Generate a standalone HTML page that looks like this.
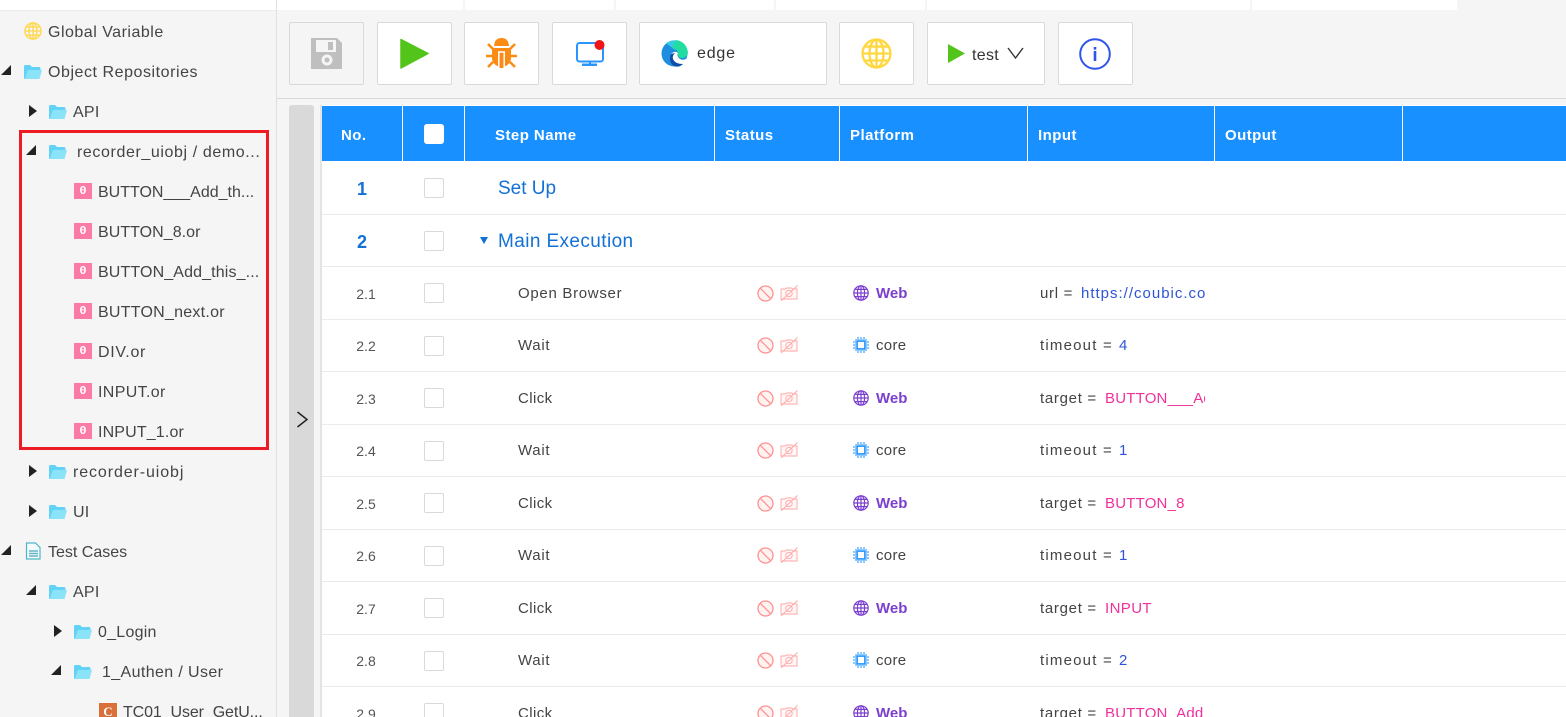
<!DOCTYPE html>
<html><head><meta charset="utf-8"><style>
html,body{margin:0;padding:0;width:1566px;height:717px;overflow:hidden;background:#f5f5f5;font-family:"Liberation Sans",sans-serif;color:#333}
#w{position:relative;width:1566px;height:717px;overflow:hidden;background:#f5f5f5}
.a{position:absolute}
.t{position:absolute;white-space:nowrap;line-height:20px;height:20px}
.s{font-size:16px;color:#444;margin-top:2px}
.btn{position:absolute;top:22px;height:61px;background:#fff;border:1px solid #d9d9d9;border-radius:2px}
.tri-d{position:absolute;width:0;height:0;border-left:10px solid transparent;border-bottom:10px solid #222}
.tri-r{position:absolute;width:0;height:0;border-left:8px solid #222;border-top:6px solid transparent;border-bottom:6px solid transparent}
.or{position:absolute;left:74px;width:18px;height:16px;background:#fb7ba6;color:#fff;font:bold 12px/16px "Liberation Mono",monospace;text-align:center;margin-top:-1px}
.hl{position:absolute;left:322px;right:0;height:1px;background:#ebebeb}
.vl{position:absolute;top:106px;height:55px;width:1px;background:#fff}
.h{position:absolute;top:125px;font-size:15px;font-weight:bold;color:#fff;line-height:20px;letter-spacing:.45px;margin-top:1px}
.cb{position:absolute;left:424px;width:18px;height:18px;border:1px solid #d9d9d9;border-radius:2px;background:#fff}
.no{position:absolute;left:340px;width:52px;text-align:center;font-size:14px;line-height:20px;color:#555}
.nb{position:absolute;left:337px;width:50px;text-align:center;font-size:18px;font-weight:bold;line-height:24px;color:#1370d6}
.sec{position:absolute;left:498px;font-size:19px;line-height:24px;color:#1370d6;white-space:nowrap;letter-spacing:.4px}
.st{position:absolute;left:518px;font-size:15px;line-height:20px;color:#444;letter-spacing:.7px;white-space:nowrap}
.pf{position:absolute;left:876px;font-size:15px;line-height:20px;font-weight:bold;color:#7b3fd0}
.pc{position:absolute;left:876px;font-size:15px;line-height:20px;color:#444;letter-spacing:.3px}
.in{position:absolute;left:1040px;width:165px;overflow:hidden;white-space:nowrap;font-size:15px;line-height:20px;color:#444;letter-spacing:.4px}
.in i{font-style:normal;display:inline-block}
.u{width:41px;letter-spacing:.7px}.o{width:79px;letter-spacing:1.2px}.g{width:65px;letter-spacing:.7px}
.bl{color:#2f54d8}.pk{color:#f0309b;letter-spacing:.2px}
svg.i{position:absolute;overflow:visible}
</style></head><body><div id="w">
<svg width="0" height="0" style="position:absolute"><defs>
<symbol id="folder" viewBox="0 0 18 16"><path d="M0 2.500Q0 1 1.500 1H6L8 3H15Q16.500 3 16.500 4.500V8H4L2 15H1Q0 15 0 14Z" fill="#62d2f7"/><path d="M3.800 6H18L15.500 15H0.800Z" fill="#8ae3f6"/></symbol>
<symbol id="globe" viewBox="0 0 20 20"><g fill="none" stroke="currentColor" stroke-width="1.500"><circle cx="10" cy="10" r="9"/><ellipse cx="10" cy="10" rx="4.500" ry="9"/><path d="M10 1V19M1 10H19M2.200 5.500H17.800M2.200 14.500H17.800"/></g></symbol>
<symbol id="chip" viewBox="0 0 16 16"><rect x="2" y="2" width="12" height="12" fill="#91caff"/><rect x="4.200" y="4.200" width="7.600" height="7.600" fill="#fff" stroke="#1890ff" stroke-width="1.300"/><path d="M5 0V2M8 0V2M11 0V2M5 14V16M8 14V16M11 14V16M0 5H2M0 8H2M0 11H2M14 5H16M14 8H16M14 11H16" stroke="#1890ff" stroke-width="1"/></symbol>
<symbol id="ban" viewBox="0 0 17 17"><circle cx="8.500" cy="8.500" r="7.500" fill="#fff3f2" stroke="#ff9090" stroke-width="1.300"/><path d="M3.200 3.200L13.800 13.800" stroke="#ff9090" stroke-width="1.300"/></symbol>
<symbol id="cam" viewBox="0 0 18 16"><g fill="none" stroke="#ffa5a5" stroke-width=".9"><path d="M1 4H5L6.500 3H11.500L13 4H17V14H1Z" fill="#fff6f5"/><circle cx="9" cy="8.500" r="3.200"/><path d="M1 16L17.500 .5"/></g></symbol>
</defs></svg>

<div class="a" style="left:0;top:0;width:276px;height:10px;background:#fff"></div>
<div class="a" style="left:0;top:10px;width:276px;height:1px;background:#ececec"></div>
<div class="a" style="left:276px;top:0;width:1px;height:717px;background:#e0e0e0"></div>

<svg class="i" style="left:24px;top:22px" width="18" height="18" color="#ffd84d"><use href="#globe" width="18" height="18"/></svg>
<div class="t s" style="left:48px;top:21px;letter-spacing:.5px">Global Variable</div>
<div class="tri-d" style="left:1px;top:65px"></div>
<svg class="i" style="left:24px;top:64px" width="18" height="16"><use href="#folder" width="18" height="16"/></svg>
<div class="t s" style="left:48px;top:61px;letter-spacing:.55px">Object Repositories</div>
<div class="tri-r" style="left:29px;top:105px"></div>
<svg class="i" style="left:49px;top:104px" width="18" height="16"><use href="#folder" width="18" height="16"/></svg>
<div class="t s" style="left:73px;top:101px;letter-spacing:.25px">API</div>

<div class="tri-d" style="left:26px;top:145px"></div>
<svg class="i" style="left:49px;top:144px" width="18" height="16"><use href="#folder" width="18" height="16"/></svg>
<div class="t s" style="left:77px;top:141px;letter-spacing:.6px">recorder_uiobj / demo...</div>
<div class="or" style="top:184px">0</div><div class="t s" style="left:98px;top:181px">BUTTON___Add_th...</div>
<div class="or" style="top:224px">0</div><div class="t s" style="left:98px;top:221px;letter-spacing:.05px">BUTTON_8.or</div>
<div class="or" style="top:264px">0</div><div class="t s" style="left:98px;top:261px;letter-spacing:.13px">BUTTON_Add_this_...</div>
<div class="or" style="top:304px">0</div><div class="t s" style="left:98px;top:301px;letter-spacing:.25px">BUTTON_next.or</div>
<div class="or" style="top:344px">0</div><div class="t s" style="left:98px;top:341px;letter-spacing:.7px">DIV.or</div>
<div class="or" style="top:384px">0</div><div class="t s" style="left:98px;top:381px;letter-spacing:.35px">INPUT.or</div>
<div class="or" style="top:424px">0</div><div class="t s" style="left:98px;top:421px;letter-spacing:.15px">INPUT_1.or</div>
<div class="a" style="left:19px;top:130px;width:244px;height:314px;border:3px solid #ed1c24"></div>

<div class="tri-r" style="left:29px;top:465px"></div>
<svg class="i" style="left:49px;top:464px" width="18" height="16"><use href="#folder" width="18" height="16"/></svg>
<div class="t s" style="left:73px;top:461px;letter-spacing:.9px">recorder-uiobj</div>
<div class="tri-r" style="left:29px;top:505px"></div>
<svg class="i" style="left:49px;top:504px" width="18" height="16"><use href="#folder" width="18" height="16"/></svg>
<div class="t s" style="left:73px;top:501px;letter-spacing:.25px">UI</div>
<div class="tri-d" style="left:1px;top:545px"></div>
<svg class="i" style="left:25px;top:542px" width="16" height="18" viewBox="0 0 16 18"><path d="M1.500 1H10.500L15 5.500V17H1.500Z" fill="#f3fbfc" stroke="#4fb6c9" stroke-width="1.200"/><path d="M4 9H13M4 11.500H13M4 14H13" stroke="#6bb4c8" stroke-width="1.500"/></svg>
<div class="t s" style="left:48px;top:541px;letter-spacing:0">Test Cases</div>
<div class="tri-d" style="left:26px;top:585px"></div>
<svg class="i" style="left:49px;top:584px" width="18" height="16"><use href="#folder" width="18" height="16"/></svg>
<div class="t s" style="left:73px;top:581px;letter-spacing:.25px">API</div>
<div class="tri-r" style="left:54px;top:625px"></div>
<svg class="i" style="left:74px;top:624px" width="18" height="16"><use href="#folder" width="18" height="16"/></svg>
<div class="t s" style="left:98px;top:621px;letter-spacing:.25px">0_Login</div>
<div class="tri-d" style="left:51px;top:665px"></div>
<svg class="i" style="left:74px;top:664px" width="18" height="16"><use href="#folder" width="18" height="16"/></svg>
<div class="t s" style="left:102px;top:661px;letter-spacing:.38px">1_Authen / User</div>
<div class="a" style="left:99px;top:703px;width:18px;height:14px;background:#d9703a;color:#fff;font:bold 13px/17px 'Liberation Serif',serif;text-align:center">C</div>
<div class="t s" style="left:123px;top:701px;letter-spacing:-.1px">TC01_User_GetU...</div>

<!-- top tabs -->
<div class="a" style="left:277px;top:0;width:1180px;height:10px;background:#fff"></div>
<div class="a" style="left:463px;top:0;width:2px;height:10px;background:#f5f5f5"></div>
<div class="a" style="left:614px;top:0;width:2px;height:10px;background:#f5f5f5"></div>
<div class="a" style="left:774px;top:0;width:2px;height:10px;background:#f5f5f5"></div>
<div class="a" style="left:925px;top:0;width:2px;height:10px;background:#f5f5f5"></div>
<div class="a" style="left:1250px;top:0;width:2px;height:10px;background:#f5f5f5"></div>

<!-- toolbar -->
<div class="btn" style="left:289px;width:73px;background:#f5f5f5"></div>
<svg class="i" style="left:311px;top:38px" width="31" height="31" viewBox="0 0 31 31"><path d="M0 0H26L31 5V31H0Z" fill="#bfbfbf"/><rect x="5" y="2" width="20" height="12" fill="#f5f5f5"/><rect x="17" y="4" width="5" height="8" fill="#bfbfbf"/><circle cx="16" cy="22" r="5.500" fill="#f5f5f5"/><circle cx="16" cy="22" r="2.500" fill="#bfbfbf"/></svg>
<div class="btn" style="left:377px;width:73px"></div>
<svg class="i" style="left:400px;top:38px" width="29" height="31" viewBox="0 0 29 31"><path d="M1 1.500L28 15.500L1 30Z" fill="#52c41a" stroke="#52c41a" stroke-width="1.500" stroke-linejoin="round"/></svg>
<div class="btn" style="left:464px;width:73px"></div>
<svg class="i" style="left:486px;top:38px" width="31" height="30" viewBox="0 0 31 30"><g fill="#fa8c16"><path d="M8 8Q8.500 0 15.500 0T23 8Z"/><path d="M6 10H25V20Q25 27 15.500 29.500Q6 27 6 20Z"/></g><path d="M12.800 30V14H18.200V30" fill="#fa8c16" stroke="#fff" stroke-width="1.500"/><path d="M7 11L2 6M24 11L29 6M7 18H0M24 18H31M7 24L2 29M24 24L29 29" stroke="#fa8c16" stroke-width="2.500"/></svg>
<div class="btn" style="left:552px;width:73px"></div>
<svg class="i" style="left:575px;top:40px" width="30" height="27" viewBox="0 0 30 27"><rect x="2" y="3" width="26" height="18.500" rx="2.500" fill="none" stroke="#2b95ff" stroke-width="2"/><path d="M14 21H16V23.500H14ZM7 23.500H22V26H7Z" fill="#2b95ff"/><circle cx="24.500" cy="5" r="5" fill="#f01414"/></svg>
<div class="btn" style="left:639px;width:186px"></div>
<svg class="i" style="left:661px;top:40px" width="27" height="27" viewBox="0 0 27 27"><circle cx="13.500" cy="13.500" r="13" fill="#1f8de0"/><path d="M5 3Q13-2 21 2L14 10Q10 7 5 3Z" fill="#37c9e8"/><path d="M15 0Q26 2 27 13Q26 18 20 18Q16 17 17 13Q16 9 11 8Z" fill="#22dca0"/><path d="M10 14Q14 10 17 13Q15 16 19 19Q23 21 26 18Q24 23 20 25Q12 25 10 18Z" fill="#fff"/><path d="M10 14Q7 22 13 26Q18 28 22 24Q14 24 12 19Q11 16 14 13Z" fill="#0f4ea8"/></svg>
<div class="t" style="left:697px;top:44px;font-size:16px;color:#333;letter-spacing:.8px">edge</div>
<div class="btn" style="left:839px;width:73px"></div>
<svg class="i" style="left:861px;top:38px" width="31" height="31" color="#ffd740"><use href="#globe" width="31" height="31"/></svg>
<div class="btn" style="left:927px;width:116px"></div>
<svg class="i" style="left:948px;top:44px" width="17" height="19"><path d="M0 0L17 9.500L0 19Z" fill="#52c41a"/></svg>
<div class="t" style="left:972px;top:46px;font-size:16px;color:#333;letter-spacing:.3px">test</div>
<svg class="i" style="left:1007px;top:47px" width="17" height="12"><path d="M1 1L8.500 11L16 1" fill="none" stroke="#333" stroke-width="1.400"/></svg>
<div class="btn" style="left:1058px;width:73px"></div>
<svg class="i" style="left:1079px;top:38px" width="32" height="32" viewBox="0 0 32 32"><circle cx="16" cy="16" r="14.800" fill="none" stroke="#2f54eb" stroke-width="2"/><rect x="14.700" y="13" width="2.600" height="10" fill="#2f54eb"/><rect x="14.700" y="9" width="2.600" height="2.600" fill="#2f54eb"/></svg>
<div class="a" style="left:277px;top:98px;width:1289px;height:1px;background:#d9d9d9"></div>

<!-- collapse bar -->
<div class="a" style="left:289px;top:105px;width:25px;height:612px;background:#d9d9d9;border-radius:3px 3px 0 0"></div>
<svg class="i" style="left:296px;top:411px" width="13" height="17"><path d="M1.500 1L11 8.500L1.500 16" fill="none" stroke="#222" stroke-width="1.500"/></svg>

<!-- table -->
<div class="a" style="left:320px;top:105px;width:1246px;height:612px;background:#fff;border-left:2px solid #e4e4e4;box-sizing:border-box"></div>
<div class="a" style="left:322px;top:106px;width:1244px;height:55px;background:#1890ff"></div>
<div class="vl" style="left:402px"></div><div class="vl" style="left:464px"></div><div class="vl" style="left:714px"></div><div class="vl" style="left:839px"></div><div class="vl" style="left:1027px"></div><div class="vl" style="left:1214px"></div><div class="vl" style="left:1402px"></div>
<div class="h" style="left:341px">No.</div>
<div class="a" style="left:424px;top:124px;width:20px;height:20px;background:#fff;border-radius:3px"></div>
<div class="h" style="left:495px">Step Name</div>
<div class="h" style="left:725px">Status</div>
<div class="h" style="left:850px">Platform</div>
<div class="h" style="left:1038px">Input</div>
<div class="h" style="left:1225px">Output</div>

<div class="hl" style="top:214px"></div><div class="hl" style="top:266px"></div><div class="hl" style="top:319px"></div><div class="hl" style="top:371px"></div><div class="hl" style="top:424px"></div><div class="hl" style="top:476px"></div><div class="hl" style="top:529px"></div><div class="hl" style="top:581px"></div><div class="hl" style="top:634px"></div><div class="hl" style="top:686px"></div>

<div class="nb" style="top:177px">1</div><div class="cb" style="top:178px"></div><div class="sec" style="top:177px;letter-spacing:0">Set Up</div>
<div class="nb" style="top:230px">2</div><div class="cb" style="top:231px"></div>
<div class="a" style="left:480px;top:237px;width:0;height:0;border-left:4px solid transparent;border-right:4px solid transparent;border-top:7px solid #1370d6"></div>
<div class="sec" style="top:230px">Main Execution</div>

<div class="no" style="top:284px">2.1</div><div class="cb" style="top:283px"></div><div class="st" style="top:284px;letter-spacing:.7px">Open Browser</div>
<svg class="i" style="left:757px;top:285px" width="17" height="17"><use href="#ban" width="17" height="17"/></svg><svg class="i" style="left:780px;top:285px" width="18" height="16"><use href="#cam" width="18" height="16"/></svg>
<svg class="i" style="left:853px;top:285px" width="16" height="16" color="#7b3fd0"><use href="#globe" width="16" height="16"/></svg><div class="pf" style="top:284px">Web</div>
<div class="in" style="top:284px"><i class="u">url =</i><span class="bl" style="letter-spacing:1px">https://coubic.com</span></div>

<div class="no" style="top:336px">2.2</div><div class="cb" style="top:336px"></div><div class="st" style="top:336px">Wait</div>
<svg class="i" style="left:757px;top:337px" width="17" height="17"><use href="#ban" width="17" height="17"/></svg><svg class="i" style="left:780px;top:337px" width="18" height="16"><use href="#cam" width="18" height="16"/></svg>
<svg class="i" style="left:853px;top:337px" width="16" height="16"><use href="#chip" width="16" height="16"/></svg><div class="pc" style="top:336px">core</div>
<div class="in" style="top:336px"><i class="o">timeout =</i><span class="bl">4</span></div>

<div class="no" style="top:389px">2.3</div><div class="cb" style="top:388px"></div><div class="st" style="top:389px;letter-spacing:.4px">Click</div>
<svg class="i" style="left:757px;top:390px" width="17" height="17"><use href="#ban" width="17" height="17"/></svg><svg class="i" style="left:780px;top:390px" width="18" height="16"><use href="#cam" width="18" height="16"/></svg>
<svg class="i" style="left:853px;top:390px" width="16" height="16" color="#7b3fd0"><use href="#globe" width="16" height="16"/></svg><div class="pf" style="top:389px">Web</div>
<div class="in" style="top:389px"><i class="g">target =</i><span class="pk">BUTTON___Add</span></div>

<div class="no" style="top:441px">2.4</div><div class="cb" style="top:441px"></div><div class="st" style="top:441px">Wait</div>
<svg class="i" style="left:757px;top:442px" width="17" height="17"><use href="#ban" width="17" height="17"/></svg><svg class="i" style="left:780px;top:442px" width="18" height="16"><use href="#cam" width="18" height="16"/></svg>
<svg class="i" style="left:853px;top:442px" width="16" height="16"><use href="#chip" width="16" height="16"/></svg><div class="pc" style="top:441px">core</div>
<div class="in" style="top:441px"><i class="o">timeout =</i><span class="bl">1</span></div>

<div class="no" style="top:494px">2.5</div><div class="cb" style="top:493px"></div><div class="st" style="top:494px;letter-spacing:.4px">Click</div>
<svg class="i" style="left:757px;top:495px" width="17" height="17"><use href="#ban" width="17" height="17"/></svg><svg class="i" style="left:780px;top:495px" width="18" height="16"><use href="#cam" width="18" height="16"/></svg>
<svg class="i" style="left:853px;top:495px" width="16" height="16" color="#7b3fd0"><use href="#globe" width="16" height="16"/></svg><div class="pf" style="top:494px">Web</div>
<div class="in" style="top:494px"><i class="g">target =</i><span class="pk">BUTTON_8</span></div>

<div class="no" style="top:546px">2.6</div><div class="cb" style="top:546px"></div><div class="st" style="top:546px">Wait</div>
<svg class="i" style="left:757px;top:547px" width="17" height="17"><use href="#ban" width="17" height="17"/></svg><svg class="i" style="left:780px;top:547px" width="18" height="16"><use href="#cam" width="18" height="16"/></svg>
<svg class="i" style="left:853px;top:547px" width="16" height="16"><use href="#chip" width="16" height="16"/></svg><div class="pc" style="top:546px">core</div>
<div class="in" style="top:546px"><i class="o">timeout =</i><span class="bl">1</span></div>

<div class="no" style="top:599px">2.7</div><div class="cb" style="top:598px"></div><div class="st" style="top:599px;letter-spacing:.4px">Click</div>
<svg class="i" style="left:757px;top:600px" width="17" height="17"><use href="#ban" width="17" height="17"/></svg><svg class="i" style="left:780px;top:600px" width="18" height="16"><use href="#cam" width="18" height="16"/></svg>
<svg class="i" style="left:853px;top:600px" width="16" height="16" color="#7b3fd0"><use href="#globe" width="16" height="16"/></svg><div class="pf" style="top:599px">Web</div>
<div class="in" style="top:599px"><i class="g">target =</i><span class="pk" style="letter-spacing:.4px">INPUT</span></div>

<div class="no" style="top:651px">2.8</div><div class="cb" style="top:651px"></div><div class="st" style="top:651px">Wait</div>
<svg class="i" style="left:757px;top:652px" width="17" height="17"><use href="#ban" width="17" height="17"/></svg><svg class="i" style="left:780px;top:652px" width="18" height="16"><use href="#cam" width="18" height="16"/></svg>
<svg class="i" style="left:853px;top:652px" width="16" height="16"><use href="#chip" width="16" height="16"/></svg><div class="pc" style="top:651px">core</div>
<div class="in" style="top:651px"><i class="o">timeout =</i><span class="bl">2</span></div>

<div class="no" style="top:704px">2.9</div><div class="cb" style="top:703px"></div><div class="st" style="top:704px;letter-spacing:.4px">Click</div>
<svg class="i" style="left:757px;top:705px" width="17" height="17"><use href="#ban" width="17" height="17"/></svg><svg class="i" style="left:780px;top:705px" width="18" height="16"><use href="#cam" width="18" height="16"/></svg>
<svg class="i" style="left:853px;top:705px" width="16" height="16" color="#7b3fd0"><use href="#globe" width="16" height="16"/></svg><div class="pf" style="top:704px">Web</div>
<div class="in" style="top:704px"><i class="g">target =</i><span class="pk">BUTTON_Add</span></div>
</div></body></html>
